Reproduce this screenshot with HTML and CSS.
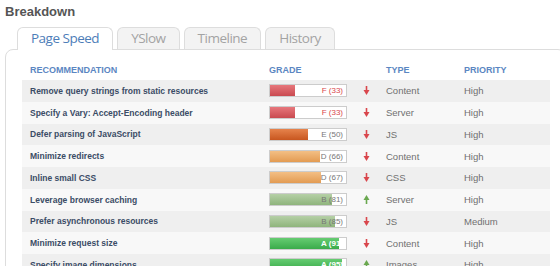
FILE: index.html
```html
<!DOCTYPE html>
<html lang="en">
<head>
  <meta charset="UTF-8">
  <title>Breakdown</title>
  <link rel="stylesheet" href="styles.css">
</head>
<body>
  <h2 class="title">Breakdown</h2>

  <div class="tabs">
    <div class="tab active">Page Speed</div>
    <div class="tab">YSlow</div>
    <div class="tab">Timeline</div>
    <div class="tab">History</div>
  </div>

  <div class="panel">
    <div class="row head">
      <div>RECOMMENDATION</div>
      <div>GRADE</div>
      <div></div>
      <div>TYPE</div>
      <div>PRIORITY</div>
    </div>

    <div class="row">
      <div class="rec">Remove query strings from static resources</div>
      <div class="grade"><div class="fill f" style="width: 33%"></div><span class="score red">F (33)</span></div>
      <div class="arrow"><svg width="7" height="9" viewBox="0 0 7 9"><path class="down" d="M3.5 0v5"/><polygon class="down-head" points="0.5,4 6.5,4 3.5,9"/></svg></div>
      <div class="type">Content</div>
      <div class="prio">High</div>
    </div>

    <div class="row">
      <div class="rec">Specify a Vary: Accept-Encoding header</div>
      <div class="grade"><div class="fill f" style="width: 33%"></div><span class="score red">F (33)</span></div>
      <div class="arrow"><svg width="7" height="9" viewBox="0 0 7 9"><path class="down" d="M3.5 0v5"/><polygon class="down-head" points="0.5,4 6.5,4 3.5,9"/></svg></div>
      <div class="type">Server</div>
      <div class="prio">High</div>
    </div>

    <div class="row">
      <div class="rec">Defer parsing of JavaScript</div>
      <div class="grade"><div class="fill e" style="width: 50%"></div><span class="score">E (50)</span></div>
      <div class="arrow"><svg width="7" height="9" viewBox="0 0 7 9"><path class="down" d="M3.5 0v5"/><polygon class="down-head" points="0.5,4 6.5,4 3.5,9"/></svg></div>
      <div class="type">JS</div>
      <div class="prio">High</div>
    </div>

    <div class="row">
      <div class="rec">Minimize redirects</div>
      <div class="grade"><div class="fill d" style="width: 66%"></div><span class="score">D (66)</span></div>
      <div class="arrow"><svg width="7" height="9" viewBox="0 0 7 9"><path class="down" d="M3.5 0v5"/><polygon class="down-head" points="0.5,4 6.5,4 3.5,9"/></svg></div>
      <div class="type">Content</div>
      <div class="prio">High</div>
    </div>

    <div class="row">
      <div class="rec">Inline small CSS</div>
      <div class="grade"><div class="fill d" style="width: 67%"></div><span class="score">D (67)</span></div>
      <div class="arrow"><svg width="7" height="9" viewBox="0 0 7 9"><path class="down" d="M3.5 0v5"/><polygon class="down-head" points="0.5,4 6.5,4 3.5,9"/></svg></div>
      <div class="type">CSS</div>
      <div class="prio">High</div>
    </div>

    <div class="row">
      <div class="rec">Leverage browser caching</div>
      <div class="grade"><div class="fill b" style="width: 81%"></div><span class="score">B (81)</span></div>
      <div class="arrow"><svg width="7" height="9" viewBox="0 0 7 9"><path class="up" d="M3.5 4v5"/><polygon class="up-head" points="0.5,5 6.5,5 3.5,0"/></svg></div>
      <div class="type">Server</div>
      <div class="prio">High</div>
    </div>

    <div class="row">
      <div class="rec">Prefer asynchronous resources</div>
      <div class="grade"><div class="fill b" style="width: 85%"></div><span class="score">B (85)</span></div>
      <div class="arrow"><svg width="7" height="9" viewBox="0 0 7 9"><path class="down" d="M3.5 0v5"/><polygon class="down-head" points="0.5,4 6.5,4 3.5,9"/></svg></div>
      <div class="type">JS</div>
      <div class="prio">Medium</div>
    </div>

    <div class="row">
      <div class="rec">Minimize request size</div>
      <div class="grade"><div class="fill a" style="width: 91%"></div><span class="score white">A (91)</span></div>
      <div class="arrow"><svg width="7" height="9" viewBox="0 0 7 9"><path class="down" d="M3.5 0v5"/><polygon class="down-head" points="0.5,4 6.5,4 3.5,9"/></svg></div>
      <div class="type">Content</div>
      <div class="prio">High</div>
    </div>

    <div class="row">
      <div class="rec">Specify image dimensions</div>
      <div class="grade"><div class="fill a" style="width: 95%"></div><span class="score white">A (95)</span></div>
      <div class="arrow"><svg width="7" height="9" viewBox="0 0 7 9"><path class="up" d="M3.5 4v5"/><polygon class="up-head" points="0.5,5 6.5,5 3.5,0"/></svg></div>
      <div class="type">Images</div>
      <div class="prio">High</div>
    </div>
  </div>
</body>
</html>
```

FILE: styles.css
```css
body {
  margin: 0;
  font-family: "Liberation Sans", Arial, sans-serif;
  background: #fff;
  overflow: hidden;
}

.title {
  margin: 0;
  padding: 4px 5px 0;
  font-size: 13px;
  line-height: 16px;
  font-weight: bold;
  color: #555;
}

.tabs {
  display: flex;
  gap: 4px;
  margin: 7px 0 0 17px;
  position: relative;
  z-index: 1;
}

.tab {
  height: 21px;
  line-height: 21px;
  padding: 0 13px;
  font-family: "Open Sans", sans-serif;
  font-size: 13.5px;
  letter-spacing: -0.5px;
  color: #a3a3a3;
  background: #f3f3f3;
  border: 1px solid #ddd;
  border-bottom: none;
  border-radius: 6px 6px 0 0;
}

.tab.active {
  color: #4d7db8;
  background: #fff;
  height: 22px;
  margin-bottom: -1px;
}

.panel {
  width: 528px;
  margin-left: 5px;
  border: 1px solid #ddd;
  border-radius: 8px;
  padding: 0 15px 20px 16px;
  background: #fff;
}

.row {
  display: grid;
  grid-template-columns: 239px 90px 27px 78px 1fr;
  align-items: center;
  height: 21.75px;
  padding-left: 8px;
  background: #f8f8f8;
}

.row:nth-child(even) {
  background: #efefef;
}

.row.head {
  height: 20px;
  padding-top: 10px;
  background: #fff;
  font-size: 9px;
  font-weight: bold;
  color: #5b86c2;
}

.rec {
  font-size: 8.5px;
  font-weight: bold;
  color: #3b4c66;
}

.grade {
  position: relative;
  width: 76px;
  height: 11px;
  border: 1px solid #ccc;
  background: #fff;
}

.fill {
  height: 100%;
}

.fill.f { background: linear-gradient(#e7777c, #c94a50); }
.fill.e { background: linear-gradient(#e6834c, #c8561f); }
.fill.d { background: linear-gradient(#f3bf85, #e39b52); }
.fill.b { background: linear-gradient(#b5d0a6, #8fb47c); }
.fill.a { background: linear-gradient(#66cc72, #3aab4a); }

.score {
  position: absolute;
  right: 3px;
  top: 0;
  font-size: 8px;
  line-height: 11px;
  color: #777;
}

.score.red { color: #d9464c; }
.score.white { color: #fff; font-weight: bold; }

.arrow {
  display: flex;
  padding-left: 4px;
}

.down { stroke: #d9464c; stroke-width: 1.6; }
.down-head { fill: #d9464c; }
.up { stroke: #6aa84f; stroke-width: 1.6; }
.up-head { fill: #6aa84f; }

.type, .prio {
  font-size: 9.5px;
  color: #707070;
}
```
